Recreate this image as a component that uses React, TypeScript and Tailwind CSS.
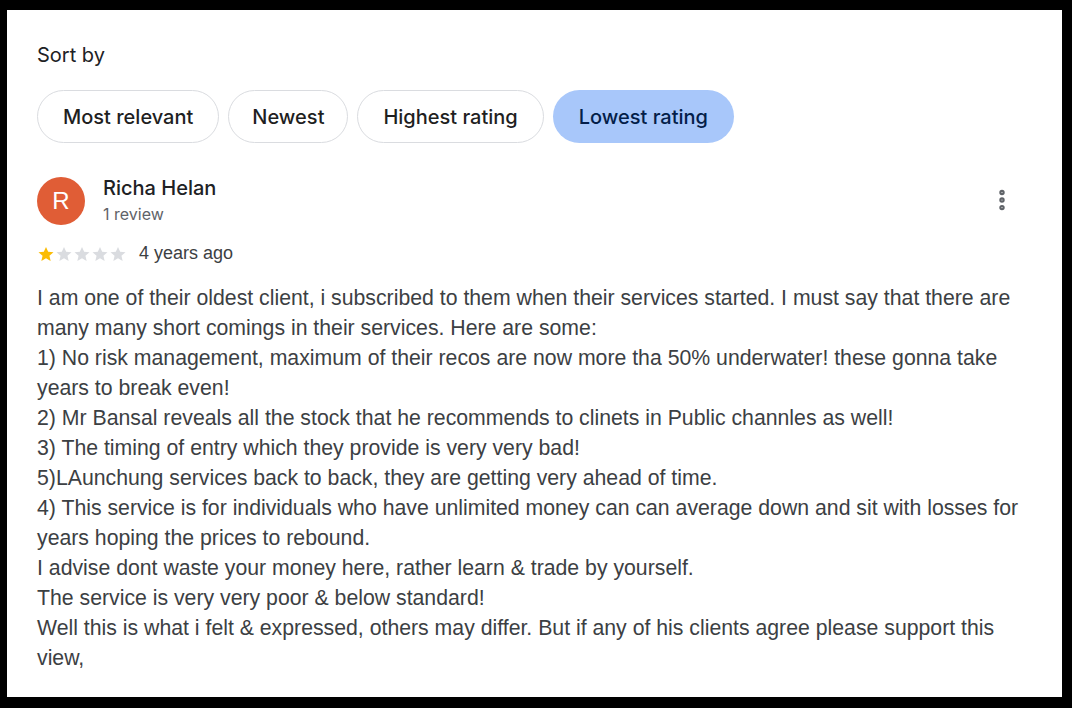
import { MoreVertical } from "lucide-react";

const chips = [
    { label: "Most relevant", pad: "px-[25px]" },
    { label: "Newest", pad: "px-[23px]" },
    { label: "Highest rating", pad: "px-[25px]" },
    { label: "Lowest rating", pad: "px-[26px]" },
];

const lines = [
    "I am one of their oldest client, i subscribed to them when their services started. I must say that there are",
    "many many short comings in their services. Here are some:",
    "1) No risk management, maximum of their recos are now more tha 50% underwater! these gonna take",
    "years to break even!",
    "2) Mr Bansal reveals all the stock that he recommends to clinets in Public channles as well!",
    "3) The timing of entry which they provide is very very bad!",
    "5)LAunchung services back to back, they are getting very ahead of time.",
    "4) This service is for individuals who have unlimited money can can average down and sit with losses for",
    "years hoping the prices to rebound.",
    "I advise dont waste your money here, rather learn & trade by yourself.",
    "The service is very very poor & below standard!",
    "Well this is what i felt & expressed, others may differ. But if any of his clients agree please support this",
    "view,",
];

function Star({ filled }: { filled: boolean }) {
    return (
        <svg width="18" height="18" viewBox="0 0 24 24">
            <path
                d="M12 2.5l2.9 6.6 7.1.6-5.4 4.7 1.6 7-6.2-3.7-6.2 3.7 1.6-7L2 9.7l7.1-.6z"
                fill={filled ? "#fbbc04" : "#dadce0"}
            />
        </svg>
    );
}

export default function App() {
    return (
        <div className="w-[1074px] h-[708px] bg-white">
            <div className="w-[1072px] h-[708px] bg-black pl-[7px] pt-[10px] pr-[10px] pb-[11px]">
                <div className="h-full bg-white overflow-hidden pl-[30px] pr-[30px] font-['Inter',sans-serif]">
                    <div className="pt-[32px] text-[20px] leading-[26px] text-[#202124]">Sort by</div>

                    <div className="flex gap-[9px] mt-[22px]">
                        {chips.map((c, i) => (
                            <div
                                key={c.label}
                                className={`h-[53px] ${c.pad} flex items-center rounded-full text-[20px] font-medium ${
                                    i === 3
                                        ? "bg-[#a8c7fa] text-[#041e49]"
                                        : "border border-[#dadce0] text-[#1f1f1f]"
                                }`}
                            >
                                {c.label}
                            </div>
                        ))}
                    </div>

                    <div className="flex items-start mt-[34px]">
                        <div className="w-[48px] h-[48px] rounded-full bg-[#e05d36] text-white text-[24px] flex items-center justify-center font-['Liberation_Sans',sans-serif]">
                            R
                        </div>
                        <div className="ml-[18px] flex-1">
                            <div className="text-[20px] leading-[24px] font-medium text-[#202124] -mt-[1px]">Richa Helan</div>
                            <div className="text-[16px] leading-[22px] text-[#5f6368] mt-[3px]">1 review</div>
                        </div>
                        <MoreVertical className="mt-[10px] mr-[17px] text-[#5f6368]" size={26} strokeWidth={3} />
                    </div>

                    <div className="flex items-center mt-[15px]">
                        <div className="flex">
                            <Star filled />
                            <Star filled={false} />
                            <Star filled={false} />
                            <Star filled={false} />
                            <Star filled={false} />
                        </div>
                        <span className="ml-[12px] text-[18px] text-[#3c4043] font-['Liberation_Sans',sans-serif]">4 years ago</span>
                    </div>

                    <div className="mt-[16px] text-[21.25px] leading-[30px] text-[#3c4043] font-['Liberation_Sans',sans-serif] whitespace-nowrap">
                        {lines.map((l) => (
                            <div key={l}>{l}</div>
                        ))}
                    </div>
                </div>
            </div>
        </div>
    );
}
